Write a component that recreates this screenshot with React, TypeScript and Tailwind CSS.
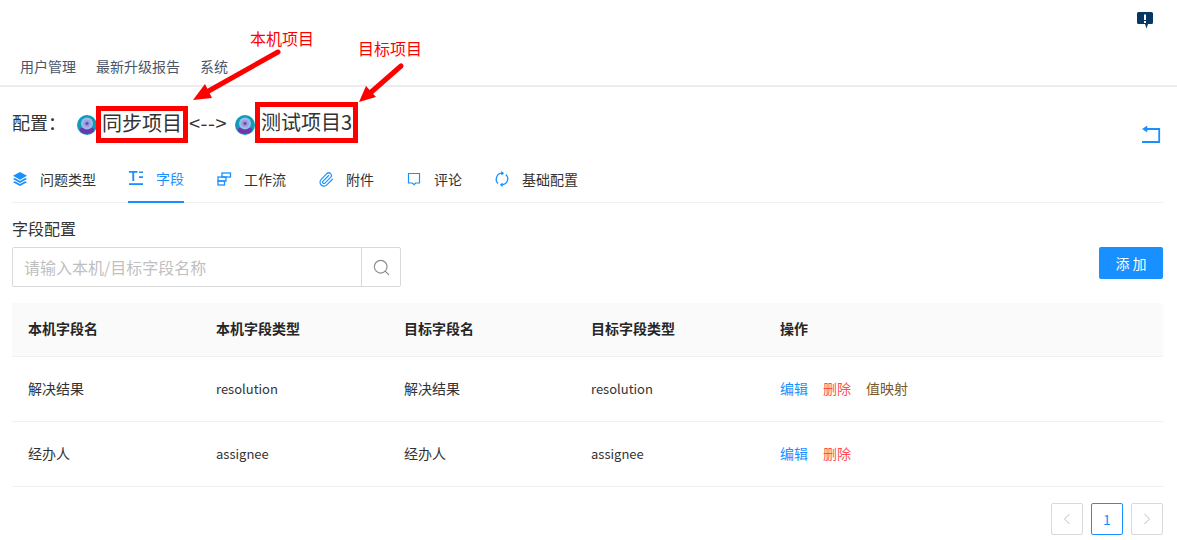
import { Paperclip, Search } from "lucide-react";

const fontStack = "font-['Noto_Sans_CJK_SC','Noto_Sans',sans-serif]";

const ProjectIcon = () => (
    <svg width="20" height="20" viewBox="0 0 20 20" className="mb-[8px] shrink-0">
        <circle cx="10" cy="10" r="10" fill="#129bb8" />
        <path d="M3 13.5 Q10 10 17 13.5 L16.5 17 Q10 21 3.5 17Z" fill="#6f35ad" />
        <circle cx="10" cy="8.5" r="6" fill="#8fc3e6" />
        <circle cx="10" cy="8.5" r="3.8" fill="#a79ae0" />
        <circle cx="10" cy="8.5" r="1.7" fill="#5f55b5" />
    </svg>
);

const tabs = [
    {
        label: "问题类型",
        icon: (
            <svg width="16" height="16" viewBox="0 0 16 16" fill="#1890ff">
                <path d="M8 1 15 4.8 8 8.8 1 4.8Z" />
                <path d="M2.8 7 1 8 8 12 15 8 13.2 7 8 10Z" />
                <path d="M2.8 10.2 1 11.2 8 15 15 11.2 13.2 10.2 8 13.1Z" />
            </svg>
        ),
    },
    {
        label: "字段",
        active: true,
        icon: (
            <svg width="16" height="16" viewBox="0 0 16 16" fill="#1890ff">
                <path d="M1 1h8.5v1.8H6.2V11H4.3V2.8H1Z" />
                <path d="M11 1.4h4v1.7h-4ZM11 6.2h4v1.7h-4Z" />
                <path d="M1 13.2h14V15H1Z" />
            </svg>
        ),
    },
    {
        label: "工作流",
        icon: (
            <svg width="16" height="16" viewBox="0 0 16 16" fill="none" stroke="#1890ff" strokeWidth="1.3">
                <rect x="6" y="2" width="8.5" height="4" />
                <rect x="2" y="6" width="8" height="4" />
                <rect x="2" y="10" width="6.5" height="4" />
            </svg>
        ),
    },
    {
        label: "附件",
        icon: <Paperclip size={17} color="#1890ff" strokeWidth={1.7} />,
    },
    {
        label: "评论",
        icon: (
            <svg width="16" height="16" viewBox="0 0 16 16" fill="none" stroke="#1890ff" strokeWidth="1.2">
                <path d="M2.5 2.5h11v9.5H9.6L8 13.6 6.4 12H2.5Z" />
            </svg>
        ),
    },
    {
        label: "基础配置",
        icon: (
            <svg width="16" height="16" viewBox="0 0 16 16" fill="none" stroke="#1890ff" strokeWidth="1.3">
                <path d="M8.5 2.2A6 6 0 0 0 4.2 12.6" />
                <path d="M7.5 13.8A6 6 0 0 0 11.8 3.4" />
                <path d="M7.6 0.4V4L9.8 2.2Z" fill="#1890ff" strokeWidth="0.5" />
                <path d="M8.4 15.6V12L6.2 13.8Z" fill="#1890ff" strokeWidth="0.5" />
            </svg>
        ),
    },
];

const rows = [
    { local: "解决结果", localType: "resolution", target: "解决结果", targetType: "resolution", mapping: true },
    { local: "经办人", localType: "assignee", target: "经办人", targetType: "assignee", mapping: false },
];

const gridCols = "grid grid-cols-[188px_188px_187px_189px_1fr]";

export default function App() {
    return (
        <div className={`relative h-[540px] w-[1177px] overflow-hidden bg-white text-sm ${fontStack}`}>
            {/* header */}
            <header className="relative h-[87px] border-b-2 border-[#ebebf0]">
                <svg width="16" height="17" viewBox="0 0 16 17" className="absolute left-[1137px] top-[12px]">
                    <path d="M1.5 0h13A1.5 1.5 0 0 1 16 1.5v9a1.5 1.5 0 0 1-1.5 1.5H11l-1.5 4.5L8 12H1.5A1.5 1.5 0 0 1 0 10.5v-9A1.5 1.5 0 0 1 1.5 0Z" fill="#073763" />
                    <path d="M7 2.5h2V8H7ZM7 9h2v2H7Z" fill="#fff" />
                </svg>
                <nav className="flex gap-5 pl-5 pt-[56px] leading-5 text-[#4a5568]">
                    <span>用户管理</span>
                    <span>最新升级报告</span>
                    <span>系统</span>
                </nav>
            </header>

            <main className="pl-3 pr-[14px]">
                {/* config title */}
                <div className="flex h-[60px] items-start justify-between">
                    <div className="flex h-[56px] items-end pb-0 pt-[15px] text-[#333]">
                        <span className="mb-[3px] w-[65px] text-lg leading-9">配置：</span>
                        <ProjectIcon />
                        <span className="-ml-px flex h-[37px] w-[92px] items-center justify-center border-[5px] border-[#ff0000] pb-1 text-xl">同步项目</span>
                        <span className="mb-[2px] w-[47px] pl-px text-xl leading-9 tracking-[0.5px]">{"<-->"}</span>
                        <ProjectIcon />
                        <span className="flex h-[41px] w-[103px] items-center justify-center border-[5px] border-[#ff0000] pb-px text-xl">测试项目3</span>
                    </div>
                    <svg width="20" height="20" viewBox="0 0 20 20" fill="none" stroke="#1890ff" strokeWidth="1.8" className="mr-[2px] mt-[37px]">
                        <path d="M3 5H18.2V18H1" />
                        <path d="M1.5 5 6 2V8Z" fill="#1890ff" strokeWidth="0.6" />
                    </svg>
                </div>

                {/* tabs */}
                <div className="flex h-[56px] gap-8 border-b border-[#f0f0f0]">
                    {tabs.map((tab) => (
                        <div
                            key={tab.label}
                            className={`flex h-[56px] items-center gap-3 pt-2 ${tab.active ? "border-b-2 border-[#1890ff] text-[#1890ff]" : "text-[#333]"}`}
                        >
                            <span className="flex w-4 justify-center">{tab.icon}</span>
                            <span>{tab.label}</span>
                        </div>
                    ))}
                </div>

                {/* field config */}
                <div className="pt-[14px] text-base leading-[22px] text-[#333]">字段配置</div>
                <div className="mt-[8px] flex items-start justify-between">
                    <div className="flex h-10 w-[389px] rounded-[2px] border border-[#d9d9d9]">
                        <input
                            readOnly
                            placeholder="请输入本机/目标字段名称"
                            className="min-w-0 flex-1 bg-transparent pl-[11px] text-base outline-none placeholder:text-[#bfbfbf]"
                        />
                        <div className="flex w-[39px] items-center justify-center border-l border-[#d9d9d9]">
                            <Search size={19} color="#8c8c8c" strokeWidth={1.5} />
                        </div>
                    </div>
                    <button className="h-8 w-16 rounded-[2px] bg-[#1890ff] text-white">添 加</button>
                </div>

                {/* table */}
                <div className="mt-4 text-[#333]">
                    <div className={`${gridCols} h-[54px] items-center border-b border-[#f0f0f0] bg-[#fafafa] pb-1 font-bold text-[#262626]`}>
                        <div className="pl-4">本机字段名</div>
                        <div className="pl-4">本机字段类型</div>
                        <div className="pl-4">目标字段名</div>
                        <div className="pl-4">目标字段类型</div>
                        <div className="pl-4">操作</div>
                    </div>
                    {rows.map((row) => (
                        <div key={row.local} className={`${gridCols} h-[65px] items-center border-b border-[#f0f0f0]`}>
                            <div className="pl-4 pb-[2px]">{row.local}</div>
                            <div className="pl-4 text-[13px]">{row.localType}</div>
                            <div className="pl-4 pb-[2px]">{row.target}</div>
                            <div className="pl-4 text-[13px]">{row.targetType}</div>
                            <div className="flex gap-[15px] pl-4 pb-[2px]">
                                <span className="text-[#1890ff]">编辑</span>
                                <span className="text-[#ff4d4f]">删除</span>
                                {row.mapping && <span className="text-[#7a5a2a]">值映射</span>}
                            </div>
                        </div>
                    ))}
                </div>

                {/* pagination */}
                <div className="mt-4 flex justify-end gap-2 text-[#bfbfbf]">
                    <div className="flex size-8 items-center justify-center rounded-[2px] border border-[#d9d9d9]">
                        <svg width="10" height="12" viewBox="0 0 10 12" fill="none" stroke="currentColor"><path d="M7.5 1 2.5 6l5 5" /></svg>
                    </div>
                    <div className="flex size-8 items-center justify-center rounded-[2px] border border-[#1890ff] text-[#1890ff]">1</div>
                    <div className="flex size-8 items-center justify-center rounded-[2px] border border-[#d9d9d9]">
                        <svg width="10" height="12" viewBox="0 0 10 12" fill="none" stroke="currentColor"><path d="M2.5 1l5 5-5 5" /></svg>
                    </div>
                </div>
            </main>

            {/* screenshot annotations */}
            <span className="absolute left-[250px] top-[27px] text-base leading-[22px] text-[#ff0000]">本机项目</span>
            <span className="absolute left-[358px] top-[37px] text-base leading-[22px] text-[#ff0000]">目标项目</span>
            <svg width="1177" height="540" className="pointer-events-none absolute left-0 top-0">
                <path d="M278 52 205 93" stroke="#ff0000" strokeWidth="5" strokeLinecap="round" />
                <path d="M193 100 205 84 212 98Z" fill="#ff0000" />
                <path d="M401 66 369 94" stroke="#ff0000" strokeWidth="5" strokeLinecap="round" />
                <path d="M359 102 366 86 376 97Z" fill="#ff0000" />
            </svg>
        </div>
    );
}
